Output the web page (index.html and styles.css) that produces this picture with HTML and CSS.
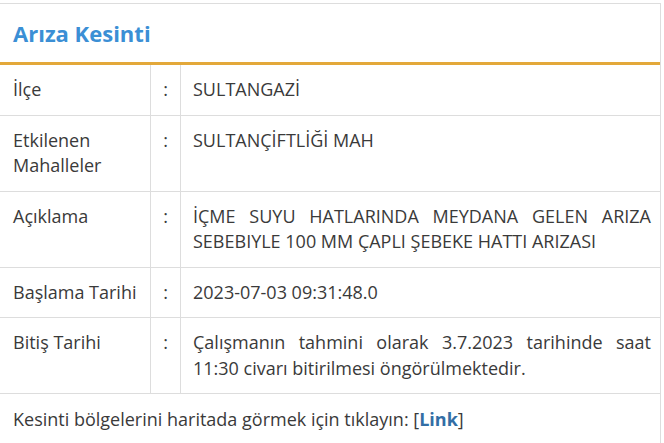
FILE: index.html
```html
<!DOCTYPE html>
<html lang="tr">
<head>
    <meta charset="UTF-8">
    <meta name="viewport" content="width=device-width, initial-scale=1.0">
    <title>Arıza Kesinti</title>
    <link rel="stylesheet" href="styles.css">
</head>
<body>
    <div class="panel">
        <div class="panelHeader">
            <h3>Arıza Kesinti</h3>
        </div>
        <table class="info">
            <tr>
                <td class="label">İlçe</td>
                <td class="colon">:</td>
                <td class="value">SULTANGAZİ</td>
            </tr>
            <tr>
                <td class="label">Etkilenen Mahalleler</td>
                <td class="colon">:</td>
                <td class="value">SULTANÇİFTLİĞİ MAH</td>
            </tr>
            <tr>
                <td class="label">Açıklama</td>
                <td class="colon">:</td>
                <td class="value">İÇME SUYU HATLARINDA MEYDANA GELEN ARIZA SEBEBIYLE 100 MM ÇAPLI ŞEBEKE HATTI ARIZASI</td>
            </tr>
            <tr>
                <td class="label">Başlama Tarihi</td>
                <td class="colon">:</td>
                <td class="value">2023-07-03 09:31:48.0</td>
            </tr>
            <tr>
                <td class="label">Bitiş Tarihi</td>
                <td class="colon">:</td>
                <td class="value">Çalışmanın tahmini olarak 3.7.2023 tarihinde saat 11:30 civarı bitirilmesi öngörülmektedir.</td>
            </tr>
        </table>
        <div class="mapLine">
            Kesinti bölgelerini haritada görmek için tıklayın: [<a href="#">Link</a>]
        </div>
    </div>
</body>
</html>
```

FILE: styles.css
```css
body {
    margin: 0;
    font-family: "Open Sans", Arial, sans-serif;
    font-size: 18px;
    color: #3a3a3a;
    background-color: #fff;
}

.panel {
    margin: 3px 0 0 -1px;
    width: 660px;
    border: 1px solid #ddd;
    border-bottom: none;
}

.panelHeader {
    height: 58px;
    display: flex;
    align-items: center;
    padding-left: 13px;
    border-bottom: 3px solid #e3a83a;
}
.panelHeader h3 {
    margin: 0;
    font-size: 22px;
    font-weight: bold;
    color: #3b8fd5;
}

.info {
    width: 100%;
    border-collapse: collapse;
}
.info td {
    border-bottom: 1px solid #ddd;
    padding: 12px 12px;
    line-height: 25.5px;
    vertical-align: top;
}
.info .label {
    width: 125px;
    padding-left: 13px;
    border-right: 1px solid #ddd;
}
.info .colon {
    width: 29px;
    padding: 12px 0;
    text-align: center;
    border-right: 1px solid #ddd;
}
.info .value {
    text-align: justify;
    padding-right: 9px;
}

.mapLine {
    padding: 13px 13px;
    line-height: 25.5px;
}
.mapLine a {
    color: #336ea5;
    font-weight: bold;
    text-decoration: none;
}
```
